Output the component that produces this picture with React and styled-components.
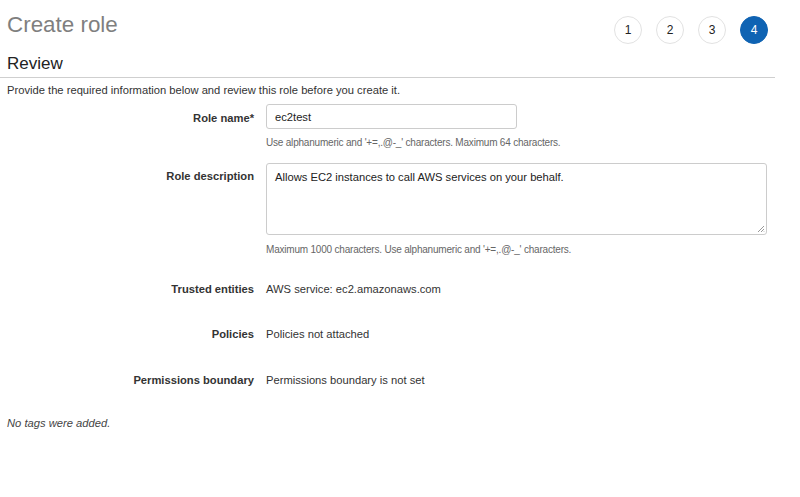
import React from "react";
import styled, { createGlobalStyle } from "styled-components";

const Global = createGlobalStyle`
  html, body { margin: 0; padding: 0; background: #fff; }
  body { font-family: "Liberation Sans", Arial, sans-serif; color: #333; }
`;

const Page = styled.div`
  width: 775px;
`;

const Header = styled.div`
  display: flex;
  align-items: flex-start;
  justify-content: space-between;
  padding: 11px 7px 0 7px;
`;

const Title = styled.h1`
  margin: 0;
  font-size: 22.4px;
  font-weight: 400;
  color: #7f7f7f;
  line-height: 28px;
`;

const Steps = styled.div`
  display: flex;
  gap: 14px;
  margin-top: 5px;
`;

const Step = styled.div`
  width: 28px;
  height: 28px;
  box-sizing: border-box;
  border-radius: 50%;
  border: 1px solid ${(p) => (p.$active ? "#0f63b3" : "#e2e2e2")};
  background: ${(p) => (p.$active ? "#0f63b3" : "#fff")};
  color: ${(p) => (p.$active ? "#fff" : "#222")};
  font-size: 12px;
  display: flex;
  align-items: center;
  justify-content: center;
`;

const Section = styled.h2`
  margin: 9px 0 0 0;
  font-size: 17px;
  font-weight: 400;
  color: #222;
  line-height: 22px;
  padding: 0 0 2px 7px;
  border-bottom: 1px solid #cfcfcf;
`;

const Body = styled.div`
  padding-left: 7px;
`;

const Intro = styled.p`
  margin: 6px 0 0 0;
  font-size: 11.2px;
  line-height: 13px;
  color: #333;
`;

const Form = styled.div`
  display: grid;
  grid-template-columns: 247px 501px;
  column-gap: 12px;
`;

const Label = styled.div`
  text-align: right;
  font-size: 11.2px;
  font-weight: 700;
  color: #333;
  padding-top: ${(p) => p.$pt}px;
  line-height: 13px;
`;

const Field = styled.div`
  padding-top: ${(p) => p.$pt}px;
  display: flex;
  flex-direction: column;
`;

const TextInput = styled.div`
  width: 251px;
  height: 25px;
  box-sizing: border-box;
  border: 1px solid #cccccc;
  border-radius: 3px;
  padding: 0 8px;
  font-size: 11.2px;
  display: flex;
  align-items: center;
  color: #222;
`;

const TextArea = styled.div`
  position: relative;
  width: 501px;
  height: 72px;
  box-sizing: border-box;
  border: 1px solid #cccccc;
  border-radius: 3px;
  padding: 7px 8px;
  font-size: 11.2px;
  line-height: 13px;
  color: #222;
`;

const Grip = styled.svg`
  position: absolute;
  right: 1px;
  bottom: 1px;
`;

const Hint = styled.div`
  font-size: 10px;
  color: #666;
  margin-top: ${(p) => p.$mt}px;
  line-height: 12px;
  letter-spacing: -0.2px;
`;

const Value = styled.div`
  font-size: 11.2px;
  line-height: 13px;
  color: #333;
  padding-top: ${(p) => p.$pt}px;
`;

const Note = styled.p`
  margin: 30px 0 0 0;
  font-size: 11.2px;
  line-height: 13px;
  font-style: italic;
  color: #444;
`;

export default function App() {
  return (
    <>
      <Global />
      <Page>
        <Header>
          <Title>Create role</Title>
          <Steps>
            {[1, 2, 3, 4].map((n) => (
              <Step key={n} $active={n === 4}>
                {n}
              </Step>
            ))}
          </Steps>
        </Header>
        <Section>Review</Section>
        <Body>
          <Intro>Provide the required information below and review this role before you create it.</Intro>
          <Form>
            <Label $pt={15}>Role name*</Label>
            <Field $pt={7}>
              <TextInput>ec2test</TextInput>
              <Hint $mt={8}>Use alphanumeric and '+=,.@-_' characters. Maximum 64 characters.</Hint>
            </Field>

            <Label $pt={21}>Role description</Label>
            <Field $pt={14}>
              <TextArea>
                Allows EC2 instances to call AWS services on your behalf.
                <Grip width="8" height="8" viewBox="0 0 8 8">
                  <path d="M7 1 L1 7 M7 4 L4 7 M7 6.5 L6.5 7" stroke="#999" strokeWidth="1" />
                </Grip>
              </TextArea>
              <Hint $mt={9}>Maximum 1000 characters. Use alphanumeric and '+=,.@-_' characters.</Hint>
            </Field>

            <Label $pt={27}>Trusted entities</Label>
            <Value $pt={27}>AWS service: ec2.amazonaws.com</Value>

            <Label $pt={32}>Policies</Label>
            <Value $pt={32}>Policies not attached</Value>

            <Label $pt={33}>Permissions boundary</Label>
            <Value $pt={33}>Permissions boundary is not set</Value>
          </Form>
          <Note>No tags were added.</Note>
        </Body>
      </Page>
    </>
  );
}
